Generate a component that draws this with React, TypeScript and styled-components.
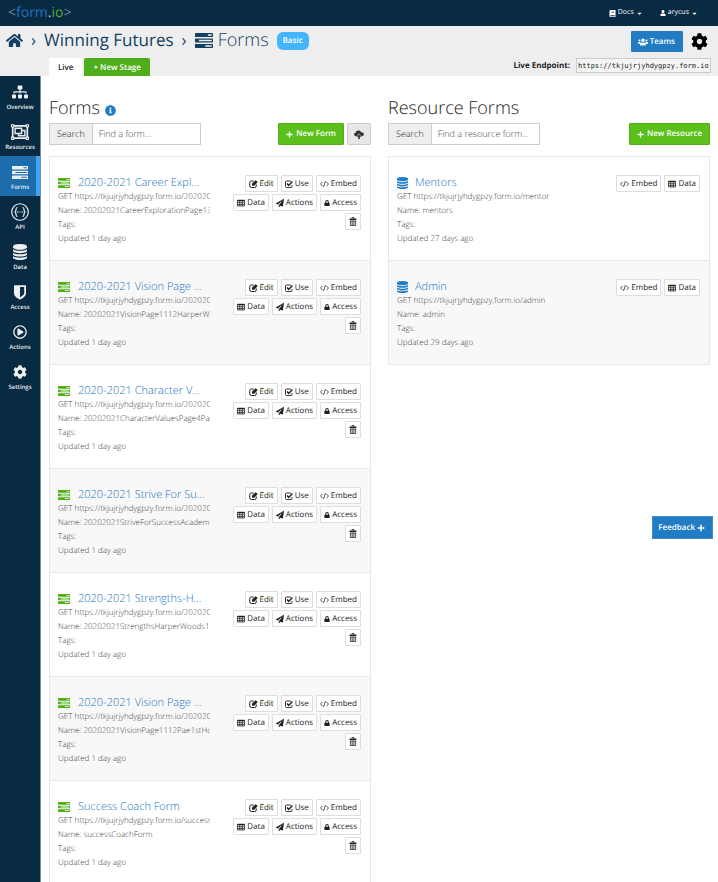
import React from 'react';
import styled, { createGlobalStyle, css } from 'styled-components';
import {
  FaBook,
  FaCaretDown,
  FaCog,
  FaHome,
  FaInfoCircle,
  FaLock,
  FaPaperPlane,
  FaPlus,
  FaRegPlayCircle,
  FaSitemap,
  FaUser,
  FaUsers,
  FaRegObjectGroup,
} from 'react-icons/fa';

const navy = '#082a43';
const blue = '#217cc4';
const green = '#5bc01b';

const GlobalStyle = createGlobalStyle`
  *, *::before, *::after { box-sizing: border-box; }
  body {
    margin: 0;
    background: #fff;
    color: #333;
    font-family: "Open Sans", sans-serif;
    font-size: 8px;
    line-height: 14px;
    text-rendering: geometricPrecision;
  }
  button, input { font: inherit; color: inherit; margin: 0; text-rendering: inherit; }
  button { cursor: pointer; }
  a { text-decoration: none; color: inherit; }
  h1, h2, h3, p, ul { margin: 0; padding: 0; font-weight: inherit; }
  ul { list-style: none; }
  svg { display: block; flex: none; }
`;

/* ---------- icons ---------- */

const TasksIcon = ({ width, height }: { width: number; height: number }) => (
  <svg width={width} height={height} viewBox="0 0 1792 1408" fill="currentColor" preserveAspectRatio="none">
    <path
      transform="translate(0 -128)"
      d="M1024 1408h640v-128h-640v128zm-640-512h1280v-128h-1280v128zm896-512h384v-128h-384v128zm512 832v256q0 26-19 45t-45 19h-1664q-26 0-45-19t-19-45v-256q0-26 19-45t45-19h1664q26 0 45 19t19 45zm0-512v256q0 26-19 45t-45 19h-1664q-26 0-45-19t-19-45v-256q0-26 19-45t45-19h1664q26 0 45 19t19 45zm0-512v256q0 26-19 45t-45 19h-1664q-26 0-45-19t-19-45v-256q0-26 19-45t45-19h1664q26 0 45 19t19 45z"
    />
  </svg>
);

const DatabaseIcon = ({ width, height }: { width: number; height: number }) => (
  <svg width={width} height={height} viewBox="0 0 1536 1792" fill="currentColor" preserveAspectRatio="none">
    <path d="M768 768q237 0 443-43t325-127v170q0 69-103 128t-280 93.500-385 34.500-385-34.500T103 896 0 768V598q119 84 325 127t443 43zm0 768q237 0 443-43t325-127v170q0 69-103 128t-280 93.500-385 34.500-385-34.500T103 1664 0 1536v-170q119 84 325 127t443 43zm0-384q237 0 443-43t325-127v170q0 69-103 128t-280 93.500-385 34.500-385-34.500T103 1280 0 1152V982q119 84 325 127t443 43zM768 0q208 0 385 34.500t280 93.500 103 128v128q0 69-103 128t-280 93.500T768 640t-385-34.500T103 512 0 384V256q0-69 103-128t280-93.500T768 0z" />
  </svg>
);

const ShieldIcon = () => (
  <svg width="12" height="15" viewBox="0 0 20 24" fill="currentColor" fillRule="evenodd">
    <path d="M1 0h18q1 0 1 1v12c0 6-6 9-10 11C6 22 0 19 0 13V1q0-1 1-1zm9 3v17c4-2 7-4 7-7V3z" />
  </svg>
);

const ApiIcon = () => (
  <svg width="18" height="18" viewBox="0 0 36 36" fill="none" stroke="currentColor" strokeWidth="2.4">
    <circle cx="18" cy="18" r="16.5" />
    <path d="M13 9c-3 0-3 1-3 4s0 5-3 5c3 0 3 2 3 5s0 4 3 4M23 9c3 0 3 1 3 4s0 5 3 5c-3 0-3 2-3 5s0 4-3 4" />
    <path d="M12 18h3M17 18h2M21 18h3" />
  </svg>
);

const EditIcon = () => (
  <svg width="9" height="8" viewBox="0 0 17 16" fill="none" stroke="currentColor" strokeWidth="2">
    <path d="M9 2H4Q1 2 1 5v7q0 3 3 3h7q3 0 3-3V9" />
    <path d="M5.500 7v4.500H10L17 4l-4-3.500z" fill="currentColor" stroke="none" />
  </svg>
);

const UseIcon = () => (
  <svg width="8" height="8" viewBox="0 0 16 16" fill="none" stroke="currentColor" strokeWidth="1.8">
    <path d="M12 2H3Q1 2 1 4v9q0 2 2 2h9q2 0 2-2v-3" />
    <path d="M4 7l3.500 4L15 3" strokeWidth="3" />
  </svg>
);

const EmbedIcon = () => (
  <svg width="9" height="8" viewBox="0 0 18 16" fill="none" stroke="currentColor" strokeWidth="1.6">
    <path d="M5 4L1 8l4 4M13 4l4 4-4 4M11 2L7 14" />
  </svg>
);

const TableIcon = () => (
  <svg width="8" height="8" viewBox="0 0 16 16" fill="none" stroke="currentColor" strokeWidth="1.5">
    <path d="M1 3h14" strokeWidth="3" />
    <path d="M1 2v12h14V2M5.500 3v11M10.500 3v11M1 7.500h14M1 11h14" />
  </svg>
);

const TrashIcon = () => (
  <svg width="8" height="9" viewBox="0 0 16 18" fill="none" stroke="currentColor" strokeWidth="1.6">
    <path d="M6 3V1h4v2" />
    <path d="M1 4.500h14" strokeWidth="3" />
    <path d="M2.800 8v9h10.400V8M6.300 8v8M9.700 8v8M2 8h12" />
  </svg>
);

const CloudUploadIcon = () => (
  <svg width="10" height="9" viewBox="0 0 18 16" fill="currentColor">
    <path d="M4 11C-1 11-1 5 3 5c0-5 8-6 10-1 5-1 7 6 1 7h-1L9 6l-4 5z" />
    <path d="M9 7.500l4.500 4.500h-3v4h-3v-4h-3z" />
  </svg>
);

/* ---------- top bar ---------- */

const TopBar = styled.header`
  display: flex;
  align-items: center;
  justify-content: space-between;
  height: 26px;
  padding: 0 20px 0 8px;
  background: ${navy};
  color: #fff;
`;

const Logo = styled.a`
  font-size: 14px;
  font-weight: 300;
  line-height: 26px;
  color: #a3afb8;
`;

const LogoPart = styled.span<{ $color: string }>`
  color: ${(p) => p.$color};
  font-weight: 400;
`;

const TopMenu = styled.nav`
  display: flex;
  gap: 17px;
`;

const MenuButton = styled.button`
  display: flex;
  align-items: center;
  gap: 2px;
  padding: 0;
  border: 0;
  background: none;
  font-size: 7px;
`;

/* ---------- page header ---------- */

const PageHeader = styled.div`
  display: flex;
  justify-content: space-between;
  height: 50px;
  background: #eee;
`;

const HeaderSide = styled.div<{ $end?: boolean }>`
  display: flex;
  flex-direction: column;
  justify-content: space-between;
  ${(p) =>
    p.$end
      ? css`
          align-items: flex-end;
          padding: 5px 7px 3px 0;
        `
      : css`
          padding: 0 0 0 6px;
        `}
`;

const Crumbs = styled.nav`
  display: flex;
  align-items: center;
  height: 28px;
  gap: 8px;
  color: #123f62;
  font-size: 17px;
  line-height: 28px;
  white-space: nowrap;
`;

const CrumbCurrent = styled.h1`
  display: flex;
  align-items: center;
  gap: 5px;
  font-size: 18px;
  font-weight: 300;
`;

const Badge = styled.span`
  margin-top: 2px;
  padding: 0 6px;
  border-radius: 6px;
  background: #44b5fc;
  color: #fff;
  font-size: 8px;
  font-weight: 600;
  line-height: 18px;
`;

const Stages = styled.div`
  display: flex;
  gap: 2px;
  padding-left: 43px;
`;

const StageTab = styled.button<{ $add?: boolean }>`
  height: 18px;
  padding: 2px 9px 0;
  border: 0;
  border-radius: 2px 2px 0 0;
  background: ${(p) => (p.$add ? '#50ad1a' : '#fff')};
  color: ${(p) => (p.$add ? '#fff' : '#222')};
  font-weight: 600;
`;

const HeaderActions = styled.div`
  display: flex;
  align-items: center;
  gap: 8px;
`;

const TeamsButton = styled.button`
  display: flex;
  align-items: center;
  gap: 2px;
  height: 21px;
  padding: 0 8px 0 7px;
  border: 0;
  border-radius: 1px;
  background: ${blue};
  color: #fff;
  font-weight: 600;
`;

const GearButton = styled.button`
  padding: 0;
  margin-right: 3px;
  border: 0;
  background: none;
  color: #000;
`;

const Endpoint = styled.label`
  display: flex;
  align-items: center;
  gap: 6px;
  color: #222;
  font-size: 8px;
  font-weight: 700;
`;

const EndpointField = styled.input`
  width: 135px;
  height: 15px;
  padding: 0 1px;
  border: 1px solid #ccc;
  background: #f4f4f4;
  font-family: "DejaVu Sans Mono", monospace;
  font-size: 7px;
  font-weight: 400;
`;

/* ---------- body ---------- */

const Body = styled.div`
  display: flex;
  min-height: calc(100vh - 76px);
`;

const Sidebar = styled.nav`
  flex: none;
  width: 41px;
  background: ${navy};
  border-right: 1px solid #7b8c9a;
  color: #eee;
`;

const SideLink = styled.a<{ $active?: boolean }>`
  display: flex;
  flex-direction: column;
  align-items: center;
  justify-content: flex-end;
  height: 40px;
  padding-bottom: 5px;
  border-right: 4px solid ${(p) => (p.$active ? '#3fa3fb' : 'transparent')};
  padding-left: 4px;
  background: ${(p) => (p.$active ? '#1d6dad' : 'transparent')};
  font-size: 6px;
  font-weight: 600;
  line-height: 8px;
`;

const SideIcon = styled.span`
  display: grid;
  place-items: center;
  height: 18px;
  margin-bottom: 2px;
`;

const Main = styled.main`
  flex: 1;
  display: grid;
  grid-template-columns: minmax(0, 1fr) minmax(0, 1fr);
  gap: 17px;
  align-items: start;
  padding: 19px 8px 0;
`;

const Column = styled.section`
  display: flex;
  flex-direction: column;
`;

const ColumnTitle = styled.h2`
  display: flex;
  align-items: center;
  gap: 5px;
  height: 26px;
  color: #222;
  font-size: 18px;
  font-weight: 300;
  line-height: 26px;
`;

const InfoMark = styled.span`
  color: ${blue};
  margin-top: 4px;
`;

const Toolbar = styled.div`
  display: flex;
  justify-content: space-between;
  margin: 2px 0 11px;
`;

const SearchGroup = styled.label`
  display: flex;
  width: 152px;
  height: 22px;
  border: 1px solid #ccc;
  font-size: 9px;
  font-weight: 300;
  line-height: 20px;
`;

const SearchLabel = styled.span`
  padding: 0 7px;
  border-right: 1px solid #ccc;
  background: #eee;
  color: #222;
`;

const SearchInput = styled.input`
  flex: 1;
  min-width: 0;
  padding: 0 6px;
  border: 0;
  background: #fff;
  &::placeholder { color: #444; opacity: 1; }
`;

const ToolbarActions = styled.div`
  display: flex;
  gap: 3px;
`;

const ToolButton = styled.button<{ $primary?: boolean }>`
  display: flex;
  align-items: center;
  gap: 3px;
  height: 22px;
  padding: 0 ${(p) => (p.$primary ? '7px' : '6px')};
  border: 1px solid ${(p) => (p.$primary ? '#53b017' : '#ccc')};
  border-radius: 1px;
  background: ${(p) => (p.$primary ? green : '#e6e6e6')};
  color: ${(p) => (p.$primary ? '#fff' : '#333')};
  font-weight: 600;
`;

const List = styled.ul`
  border: 1px solid #e8e8e8;
  border-top: 0;
`;

const Item = styled.li`
  display: flex;
  justify-content: space-between;
  height: 104px;
  padding: 18px 9px 0 8px;
  border-top: 1px solid #e8e8e8;
  &:nth-child(even) { background: #f8f8f8; }
`;

const ItemInfo = styled.div`
  width: 152px;
  color: #444;
  font-weight: 300;
`;

const ItemTitle = styled.h3<{ $resource?: boolean }>`
  display: flex;
  align-items: center;
  gap: ${(p) => (p.$resource ? '7px' : '8px')};
  height: 15px;
  color: ${(p) => (p.$resource ? blue : '#50ad1a')};
  font-size: 11px;
  line-height: 15px;
`;

const ItemLink = styled.a`
  color: #0f72c0;
  white-space: nowrap;
`;

const ItemLine = styled.p`
  overflow: hidden;
  white-space: nowrap;
`;

const ItemActions = styled.div`
  display: flex;
  flex-wrap: wrap;
  align-content: flex-start;
  justify-content: flex-end;
  width: 132px;
  column-gap: 3px;
  row-gap: 2px;
`;

const ItemButton = styled.button`
  display: flex;
  align-items: center;
  gap: 2px;
  height: 17px;
  padding: 0 3px;
  border: 1px solid #ddd;
  border-radius: 1px;
  background: #fff;
  color: #222;
`;

const FeedbackButton = styled.button`
  position: fixed;
  right: 5px;
  top: 516px;
  display: flex;
  align-items: center;
  gap: 2px;
  height: 23px;
  padding: 0 7px 0 5px;
  border: 1px solid #3d8dce;
  background: ${blue};
  color: #fff;
  font-weight: 600;
`;

/* ---------- data ---------- */

const sideLinks = [
  { label: 'Overview', icon: <FaSitemap size={16} /> },
  { label: 'Resources', icon: <FaRegObjectGroup size={18} /> },
  { label: 'Forms', icon: <TasksIcon width={16} height={13} />, active: true },
  { label: 'API', icon: <ApiIcon /> },
  { label: 'Data', icon: <DatabaseIcon width={14} height={16} /> },
  { label: 'Access', icon: <ShieldIcon /> },
  { label: 'Actions', icon: <FaRegPlayCircle size={14} /> },
  { label: 'Settings', icon: <FaCog size={14} /> },
];

const forms = [
  { title: '2020-2021 Career Expl…', path: '202020', name: '20202021CareerExplorationPage13' },
  { title: '2020-2021 Vision Page …', path: '202020', name: '20202021VisionPage1112HarperW' },
  { title: '2020-2021 Character V…', path: '202020', name: '20202021CharacterValuesPage4Pa' },
  { title: '2020-2021 Strive For Su…', path: '202020', name: '20202021StriveForSuccessAcadem' },
  { title: '2020-2021 Strengths-H…', path: '202020', name: '20202021StrengthsHarperWoods1' },
  { title: '2020-2021 Vision Page …', path: '202020', name: '20202021VisionPage1112Pae1stHo' },
  { title: 'Success Coach Form', path: 'success', name: 'successCoachForm' },
];

const resources = [
  { title: 'Mentors', path: 'mentor', name: 'mentors', updated: '27 days ago' },
  { title: 'Admin', path: 'admin', name: 'admin', updated: '29 days ago' },
];

interface EntryProps {
  title: string;
  path: string;
  name: string;
  updated: string;
  resource?: boolean;
}

const Entry = ({ title, path, name, updated, resource }: EntryProps) => (
  <Item>
    <ItemInfo>
      <ItemTitle $resource={resource}>
        {resource ? <DatabaseIcon width={11} height={12} /> : <TasksIcon width={12} height={10} />}
        <ItemLink href="#">{title}</ItemLink>
      </ItemTitle>
      <ItemLine>GET https://tkjujrjyhdygpzy.form.io/{path}</ItemLine>
      <ItemLine>Name: {name}</ItemLine>
      <ItemLine>Tags:</ItemLine>
      <ItemLine>Updated {updated}</ItemLine>
    </ItemInfo>
    {resource ? (
      <ItemActions>
        <ItemButton><EmbedIcon />Embed</ItemButton>
        <ItemButton><TableIcon />Data</ItemButton>
      </ItemActions>
    ) : (
      <ItemActions>
        <ItemButton><EditIcon />Edit</ItemButton>
        <ItemButton><UseIcon />Use</ItemButton>
        <ItemButton><EmbedIcon />Embed</ItemButton>
        <ItemButton><TableIcon />Data</ItemButton>
        <ItemButton><FaPaperPlane size={8} />Actions</ItemButton>
        <ItemButton><FaLock size={6} />Access</ItemButton>
        <ItemButton aria-label="Delete"><TrashIcon /></ItemButton>
      </ItemActions>
    )}
  </Item>
);

export default function App() {
  return (
    <>
      <GlobalStyle />
      <TopBar>
        <Logo href="#">
          &lt;<LogoPart $color="#2272b8">form</LogoPart>
          <LogoPart $color="#c5cdd3">.</LogoPart>
          <LogoPart $color="#51ad38">io</LogoPart>&gt;
        </Logo>
        <TopMenu>
          <MenuButton><FaBook size={7} />Docs<FaCaretDown size={7} /></MenuButton>
          <MenuButton><FaUser size={6} />arycus<FaCaretDown size={7} /></MenuButton>
        </TopMenu>
      </TopBar>
      <PageHeader>
        <HeaderSide>
          <Crumbs>
            <a href="#" aria-label="Home"><FaHome size={17} /></a>
            <span>›</span>
            <a href="#">Winning Futures</a>
            <span>›</span>
            <CrumbCurrent><TasksIcon width={18} height={15} />Forms</CrumbCurrent>
            <Badge>Basic</Badge>
          </Crumbs>
          <Stages>
            <StageTab>Live</StageTab>
            <StageTab $add>+ New Stage</StageTab>
          </Stages>
        </HeaderSide>
        <HeaderSide $end>
          <HeaderActions>
            <TeamsButton><FaUsers size={10} />Teams</TeamsButton>
            <GearButton aria-label="Project settings"><FaCog size={17} /></GearButton>
          </HeaderActions>
          <Endpoint>
            Live Endpoint:
            <EndpointField readOnly value="https://tkjujrjyhdygpzy.form.io" />
          </Endpoint>
        </HeaderSide>
      </PageHeader>
      <Body>
        <Sidebar>
          {sideLinks.map((l) => (
            <SideLink key={l.label} href="#" $active={l.active}>
              <SideIcon>{l.icon}</SideIcon>
              {l.label}
            </SideLink>
          ))}
        </Sidebar>
        <Main>
          <Column>
            <ColumnTitle>Forms<InfoMark><FaInfoCircle size={11} /></InfoMark></ColumnTitle>
            <Toolbar>
              <SearchGroup>
                <SearchLabel>Search</SearchLabel>
                <SearchInput placeholder="Find a form…" />
              </SearchGroup>
              <ToolbarActions>
                <ToolButton $primary><FaPlus size={7} />New Form</ToolButton>
                <ToolButton aria-label="Upload form"><CloudUploadIcon /></ToolButton>
              </ToolbarActions>
            </Toolbar>
            <List>
              {forms.map((f) => (
                <Entry key={f.name} {...f} updated="1 day ago" />
              ))}
            </List>
          </Column>
          <Column>
            <ColumnTitle>Resource Forms</ColumnTitle>
            <Toolbar>
              <SearchGroup>
                <SearchLabel>Search</SearchLabel>
                <SearchInput placeholder="Find a resource form…" />
              </SearchGroup>
              <ToolButton $primary><FaPlus size={7} />New Resource</ToolButton>
            </Toolbar>
            <List>
              {resources.map((r) => (
                <Entry key={r.name} {...r} resource />
              ))}
            </List>
          </Column>
        </Main>
      </Body>
      <FeedbackButton>Feedback<FaPlus size={8} /></FeedbackButton>
    </>
  );
}
